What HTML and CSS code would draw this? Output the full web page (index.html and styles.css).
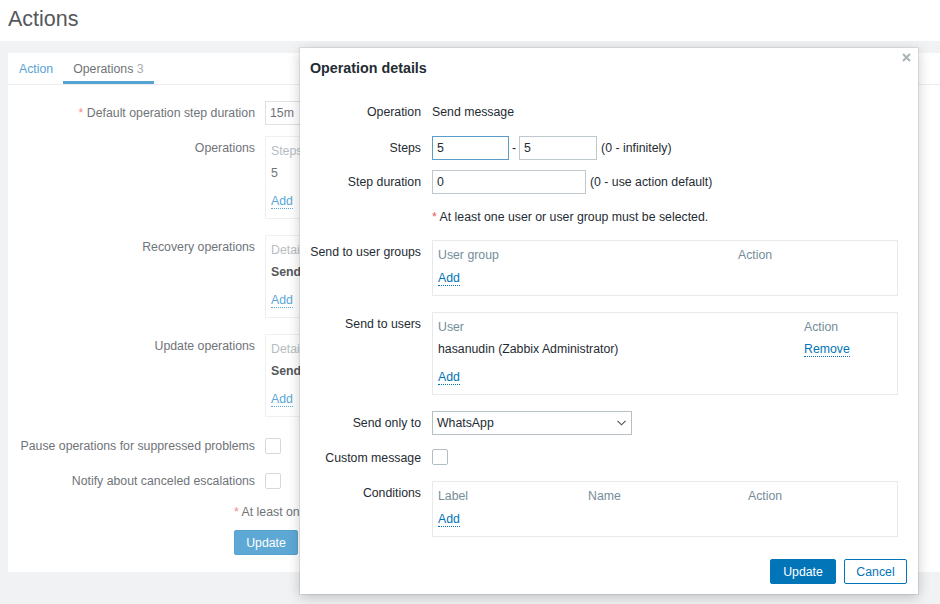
FILE: index.html
```html
<!DOCTYPE html>
<html>
<head>
<meta charset="utf-8">
<link rel="stylesheet" href="styles.css">
</head>
<body>
<div class="header"><h1>Actions</h1></div>
<div class="main">
  <div class="card">
    <div class="tabs">
      <div class="tab">Action</div>
      <div class="tab active">Operations <span class="cnt">3</span></div>
    </div>
    <div class="form">
      <div class="row">
        <div class="lbl"><span class="req">*</span> Default operation step duration</div>
        <div><div class="inp dim w50">15m</div></div>
      </div>
      <div class="row box-row">
        <div class="lbl">Operations</div>
        <div class="box dim">
          <div class="tr th"><span>Steps</span></div>
          <div class="tr td"><span>5</span></div>
          <div class="add"><a class="link">Add</a></div>
        </div>
      </div>
      <div class="row box-row">
        <div class="lbl">Recovery operations</div>
        <div class="box dim">
          <div class="tr th"><span>Details</span></div>
          <div class="tr td"><span><b>Send</b></span></div>
          <div class="add"><a class="link">Add</a></div>
        </div>
      </div>
      <div class="row box-row last">
        <div class="lbl">Update operations</div>
        <div class="box dim">
          <div class="tr th"><span>Details</span></div>
          <div class="tr td"><span><b>Send</b></span></div>
          <div class="add"><a class="link">Add</a></div>
        </div>
      </div>
      <div class="row chk-row">
        <div class="lbl">Pause operations for suppressed problems</div>
        <div><div class="cb dim"></div></div>
      </div>
      <div class="row chk-row">
        <div class="lbl">Notify about canceled escalations</div>
        <div><div class="cb dim"></div></div>
      </div>
      <div class="note-left"><span class="req">*</span> At least one</div>
      <div class="btn-left"><button class="btn-dim">Update</button></div>
    </div>
  </div>
</div>

<div class="modal">
  <div class="m-title">Operation details</div>
  <svg class="close" width="9" height="9" viewBox="0 0 9 9"><path d="M1 1L8 8M8 1L1 8" stroke="#a9b3b8" stroke-width="2"/></svg>
  <div class="m-form">
    <div class="m-row op">
      <div class="lbl">Operation</div>
      <div class="val">Send message</div>
    </div>
    <div class="m-row">
      <div class="lbl">Steps</div>
      <div class="flex">
        <div class="inp focus w77">5</div>
        <span>-</span>
        <div class="inp w78">5</div>
        <span class="hint">(0 - infinitely)</span>
      </div>
    </div>
    <div class="m-row">
      <div class="lbl">Step duration</div>
      <div class="flex g4">
        <div class="inp w154">0</div>
        <span>(0 - use action default)</span>
      </div>
    </div>
    <div class="m-row note">
      <div></div>
      <div class="val"><span class="req">*</span> At least one user or user group must be selected.</div>
    </div>
    <div class="m-row tbl-row">
      <div class="lbl">Send to user groups</div>
      <div class="box">
        <div class="tr th"><span class="c300">User group</span><span>Action</span></div>
        <div class="add"><a class="link">Add</a></div>
      </div>
    </div>
    <div class="m-row tbl-row">
      <div class="lbl">Send to users</div>
      <div class="box">
        <div class="tr th"><span class="c366">User</span><span>Action</span></div>
        <div class="tr td"><span class="c366">hasanudin (Zabbix Administrator)</span><span><a class="link">Remove</a></span></div>
        <div class="add"><a class="link">Add</a></div>
      </div>
    </div>
    <div class="m-row">
      <div class="lbl">Send only to</div>
      <div>
        <div class="select">
          <span>WhatsApp</span>
          <svg width="9" height="6" viewBox="0 0 9 6"><path d="M0.5 0.8L4.5 4.8L8.5 0.8" fill="none" stroke="#4a4f53" stroke-width="1.1"/></svg>
        </div>
      </div>
    </div>
    <div class="m-row chk">
      <div class="lbl">Custom message</div>
      <div><div class="cb"></div></div>
    </div>
    <div class="m-row">
      <div class="lbl">Conditions</div>
      <div class="box">
        <div class="tr th"><span class="c150">Label</span><span class="c160">Name</span><span>Action</span></div>
        <div class="add"><a class="link">Add</a></div>
      </div>
    </div>
  </div>
  <div class="m-foot">
    <button class="btn primary">Update</button>
    <button class="btn alt">Cancel</button>
  </div>
</div>
</body>
</html>
```
FILE: styles.css
```css
* { box-sizing: border-box; }
html, body { margin: 0; }
body {
  width: 940px;
  height: 604px;
  overflow: hidden;
  position: relative;
  font-family: "Liberation Sans", Arial, sans-serif;
  font-size: 12.3px;
  line-height: 14px;
  background: #f1f2f4;
  color: #1f2c33;
}
.header {
  height: 41px;
  background: #fff;
  padding: 7px 8px 0;
}
.header h1 {
  margin: 0;
  font-size: 21.5px;
  line-height: 24px;
  font-weight: normal;
  color: #54585b;
}
.main { padding: 12px 0 0 8px; }
.card { background: #fff; }
.tabs {
  display: flex;
  padding-left: 1px;
  border-bottom: 1px solid #eceef0;
}
.tab {
  padding: 9px 10px 5px;
  border-bottom: 3px solid transparent;
  color: #5aa3d4;
}
.tab.active { border-bottom-color: #55a2d4; color: #707478; }
.tab .cnt { color: #a8acaf; }

.form {
  display: flex;
  flex-direction: column;
  gap: 11px;
  padding: 16px 0 17px;
  color: #707479;
}
.row {
  display: grid;
  grid-template-columns: 247px 1fr;
  column-gap: 10px;
}
.row > .lbl { text-align: right; padding-top: 5px; }
.row.box-row { margin-bottom: 5px; }
.row.box-row.last { margin-bottom: 6px; }
.row.chk-row { min-height: 24px; align-items: center; }
.row.chk-row > .lbl { padding-top: 0; }
.note-left { margin: 1px 0 0 226px; white-space: nowrap; }
.btn-left { margin: 0 0 0 226px; }
.btn-dim {
  width: 64px;
  height: 25px;
  border: 1px solid #55a1cf;
  border-radius: 2px;
  background: #5ea8d5;
  color: #fff;
  font: inherit;
  padding: 0;
}
.req { color: #e45959; }
.form .req { color: #f08d8d; }

.inp {
  height: 24px;
  border: 1px solid #bfc8cd;
  padding: 0 4px;
  line-height: 22px;
  background: #fff;
}
.inp.dim { border-color: #dde1e4; }
.inp.focus { border-color: #5a9dcb; }
.w50 { width: 50px; }
.w77 { width: 77px; }
.w78 { width: 78px; }
.w154 { width: 154px; }

.box {
  border: 1px solid #e7eaec;
  padding: 3px 6px 10px 5px;
}
.box.dim { border-color: #eef0f2; width: 60px; overflow: hidden; }
.tr { display: flex; white-space: nowrap; }
.tr.th { padding: 4px 0; color: #768d99; }
.box.dim .tr.th { color: #b6bdc2; }
.tr.td { padding: 4px 0 9px; }
.box.dim .tr.td b { color: #55595c; }
.add { margin-top: 5px; }
.link {
  color: #0275b8;
  border-bottom: 1px dotted #0275b8;
}
.box.dim .link { color: #5ba7d8; border-bottom-color: #5ba7d8; }
.c150 { width: 150px; }
.c160 { width: 160px; }
.c300 { width: 300px; }
.c366 { width: 366px; }

.cb {
  width: 16px;
  height: 16px;
  border: 1px solid #b3bec4;
  border-radius: 2px;
  background: #fff;
}
.cb.dim { border-color: #d4d9dc; }

.modal {
  position: absolute;
  left: 300px;
  top: 48px;
  width: 618px;
  height: 546px;
  background: #fff;
  box-shadow: 0 0 0 1px rgba(0, 0, 0, 0.07), 0 3px 12px rgba(0, 0, 0, 0.22);
}
.m-title {
  padding: 12px 10px 0;
  font-size: 14.3px;
  line-height: 17px;
  font-weight: bold;
  color: #1f2c33;
}
.close { position: absolute; top: 5px; right: 7px; }
.m-form {
  margin-top: 23px;
  padding: 0 20px 0 10px;
  display: flex;
  flex-direction: column;
  gap: 10px;
}
.m-row {
  display: grid;
  grid-template-columns: 111px 1fr;
  column-gap: 11px;
}
.m-row > .lbl { text-align: right; padding-top: 5px; white-space: nowrap; }
.m-row.op { height: 26px; }
.m-row.op .val { padding-top: 5px; }
.m-row.note { height: 26px; }
.m-row.note .val { padding-top: 6px; }
.m-row.tbl-row { margin-bottom: 6px; }
.m-row.chk { height: 26px; }
.m-row.chk > .lbl { padding-top: 6px; }
.m-row.chk .cb { margin-top: 4px; }
.flex { display: flex; align-items: center; gap: 3px; }
.flex.g4 { gap: 4px; }
.hint { margin-left: 1px; }
.select {
  width: 200px;
  height: 24px;
  border: 1px solid #b5bfc4;
  padding: 0 5px 0 4px;
  display: flex;
  align-items: center;
  justify-content: space-between;
}
.m-foot {
  display: flex;
  justify-content: flex-end;
  gap: 8px;
  padding: 22px 11px 0;
}
.btn {
  height: 25px;
  border-radius: 2px;
  font: inherit;
  padding: 0;
}
.btn.primary {
  width: 66px;
  background: #0275b8;
  border: 1px solid #0275b8;
  color: #fff;
}
.btn.alt {
  width: 63px;
  background: #fff;
  border: 1px solid #0275b8;
  color: #0275b8;
}
```
